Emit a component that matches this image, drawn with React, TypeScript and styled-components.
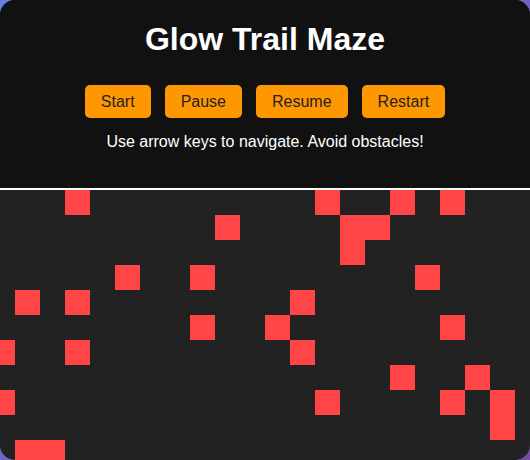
import React from "react";
import styled, { createGlobalStyle } from "styled-components";

const GlobalStyle = createGlobalStyle`
  html, body {
    margin: 0;
    padding: 0;
    width: 530px;
    height: 460px;
    overflow: hidden;
    background: linear-gradient(135deg, #667eea 0%, #764ba2 100%);
    font-family: "Liberation Sans", Arial, sans-serif;
  }
`;

const Card = styled.div`
  width: 530px;
  height: 460px;
  border-radius: 15px;
  overflow: hidden;
  background: #222;
  display: flex;
  flex-direction: column;
`;

const Header = styled.header`
  background: #111;
  padding: 21px 0 37px;
  border-bottom: 2px solid #fff;
  display: flex;
  flex-direction: column;
  align-items: center;
  flex-shrink: 0;
`;

const Title = styled.h1`
  margin: 0;
  font-size: 32px;
  line-height: 36px;
  font-weight: bold;
  color: #fff;
`;

const Controls = styled.div`
  display: flex;
  gap: 14px;
  margin-top: 28px;
`;

const Button = styled.button`
  height: 33px;
  padding: 0 16px;
  border: none;
  border-radius: 5px;
  background: #ff9800;
  color: #222;
  font-family: "Liberation Sans", Arial, sans-serif;
  font-size: 16px;
  cursor: pointer;
`;

const Hint = styled.p`
  margin: 15px 0 0;
  font-size: 16px;
  line-height: 18px;
  color: #fff;
`;

const Board = styled.div`
  flex: 1;
  display: flex;
  justify-content: center;
  overflow: hidden;
  min-height: 0;
`;

const Grid = styled.div<{ $cols: number; $rows: number }>`
  display: grid;
  grid-template-columns: repeat(${(p) => p.$cols}, 25px);
  grid-template-rows: repeat(${(p) => p.$rows}, 25px);
  flex-shrink: 0;
`;

const Cell = styled.div<{ $obstacle: boolean }>`
  width: 25px;
  height: 25px;
  background: ${(p) => (p.$obstacle ? "#ff4545" : "transparent")};
`;

const COLS = 22;
const ROWS = 11;

const obstacles = new Set<string>([
  "0,3", "0,13", "0,16", "0,18",
  "1,9", "1,14", "1,15",
  "2,14",
  "3,5", "3,8", "3,17",
  "4,1", "4,3", "4,12",
  "5,8", "5,11", "5,18",
  "6,0", "6,3", "6,12",
  "7,16", "7,19",
  "8,0", "8,13", "8,18", "8,20",
  "9,20",
  "10,1", "10,2",
]);

export default function App() {
  const cells = [];
  for (let r = 0; r < ROWS; r++) {
    for (let c = 0; c < COLS; c++) {
      cells.push(<Cell key={`${r}-${c}`} $obstacle={obstacles.has(`${r},${c}`)} />);
    }
  }
  return (
    <>
      <GlobalStyle />
      <Card>
        <Header>
          <Title>Glow Trail Maze</Title>
          <Controls>
            <Button>Start</Button>
            <Button>Pause</Button>
            <Button>Resume</Button>
            <Button>Restart</Button>
          </Controls>
          <Hint>Use arrow keys to navigate. Avoid obstacles!</Hint>
        </Header>
        <Board>
          <Grid $cols={COLS} $rows={ROWS}>
            {cells}
          </Grid>
        </Board>
      </Card>
    </>
  );
}
